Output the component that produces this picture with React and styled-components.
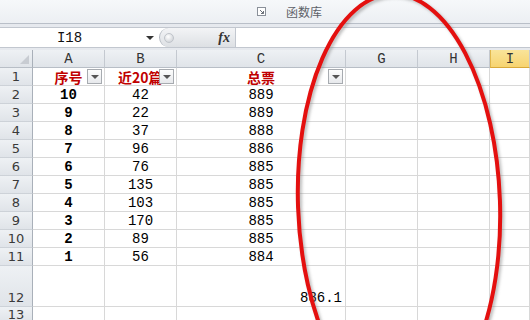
import React from 'react';
import styled, { createGlobalStyle, css } from 'styled-components';

const GlobalStyle = createGlobalStyle`
  html, body {
    margin: 0;
    padding: 0;
    background: #fff;
    overflow: hidden;
  }
  body {
    font-family: "Liberation Sans", Arial, sans-serif;
  }
`;

const Window = styled.div`
  position: relative;
  width: 530px;
  height: 320px;
  overflow: hidden;
  display: flex;
  flex-direction: column;
  background: #e6e9ee;
`;

const RibbonStrip = styled.div`
  height: 23px;
  flex: none;
  display: flex;
  align-items: center;
  background: linear-gradient(#f6f8fa, #eceff3);
  border-bottom: 1px solid #b9bfc8;
`;

const GroupLauncher = styled.div`
  width: 268px;
  display: flex;
  justify-content: flex-end;
  padding-right: 2px;
  box-sizing: border-box;
`;

const GroupLabel = styled.span`
  margin-left: 18px;
  font-family: "Noto Sans CJK SC", sans-serif;
  font-size: 12px;
  color: #5d6168;
`;

const FormulaRow = styled.div`
  height: 21px;
  flex: none;
  margin: 3px 0 2px;
  display: flex;
  background: #fff;
  border-top: 1px solid #c2c7cf;
  border-bottom: 1px solid #c2c7cf;
  box-sizing: border-box;
`;

const NameBox = styled.div`
  width: 159px;
  position: relative;
  display: flex;
  align-items: center;
  justify-content: center;
  padding-right: 20px;
  box-sizing: border-box;
  font-family: "Liberation Mono", monospace;
  font-size: 14px;
  color: #111;
`;

const Caret = styled.span`
  position: absolute;
  right: 5px;
  top: 8px;
  width: 0;
  height: 0;
  border-left: 4px solid transparent;
  border-right: 4px solid transparent;
  border-top: 4px solid #333;
`;

const FxArea = styled.div`
  width: 77px;
  display: flex;
  align-items: center;
  justify-content: space-between;
  padding: 0 5px 0 4px;
  box-sizing: border-box;
  background: linear-gradient(#f3f4f6, #dde0e4);
  border-left: 1px solid #b4b9c1;
  border-right: 1px solid #c2c7cf;
  border-radius: 10px 0 0 10px;
`;

const Grip = styled.span`
  width: 8px;
  height: 8px;
  border-radius: 50%;
  background: radial-gradient(circle at 40% 35%, #fff, #c5c9cf);
  border: 1px solid #c0c4ca;
`;

const Fx = styled.span`
  font-family: "Liberation Serif", serif;
  font-style: italic;
  font-weight: bold;
  font-size: 14px;
  color: #333;
`;

const FormulaInput = styled.div`
  flex: 1;
  background: #fff;
`;

const Sheet = styled.div`
  flex: 1;
  display: grid;
  grid-template-columns: 33px 72px 72px 169px 72px 72px 1fr;
  grid-template-rows: repeat(12, 18px) 41px 1fr;
  background: #fff;
`;

const headBase = css`
  box-sizing: border-box;
  background: linear-gradient(#eef1f4, #e0e4e9);
  border-right: 1px solid #c4c9d0;
  border-bottom: 1px solid #b8bec6;
  color: #333;
`;

const Corner = styled.div`
  ${headBase};
  position: relative;
  border-right-color: #a9b0b9;
  &::after {
    content: '';
    position: absolute;
    right: 3px;
    bottom: 3px;
    border-left: 9px solid transparent;
    border-bottom: 9px solid #c8ccd2;
  }
`;

const ColHead = styled.div`
  ${headBase};
  display: flex;
  align-items: center;
  justify-content: center;
  padding-top: 1px;
  font-family: "Liberation Mono", monospace;
  font-size: 14px;
  ${({ $active }) =>
    $active &&
    css`
      background: linear-gradient(#f9e49a, #f7d470);
      border-left: 1px solid #e2b84c;
      border-bottom-color: #d9a93a;
    `}
`;

const RowHead = styled.div`
  ${headBase};
  display: flex;
  align-items: ${({ $tall }) => ($tall ? 'flex-end' : 'center')};
  justify-content: center;
  padding-bottom: ${({ $tall }) => ($tall ? '1px' : '0')};
  border-right-color: #a9b0b9;
  border-bottom-color: #cdd2d8;
  font-family: "DejaVu Sans", sans-serif;
  font-size: 13px;
  color: #3a3a3a;
`;

const Cell = styled.div`
  position: relative;
  box-sizing: border-box;
  border-right: 1px solid #d8d8d8;
  border-bottom: 1px solid #d8d8d8;
  display: flex;
  align-items: ${({ $bottom }) => ($bottom ? 'flex-end' : 'center')};
  justify-content: ${({ $align }) =>
    $align === 'right' ? 'flex-end' : $align === 'left' ? 'flex-start' : 'center'};
  padding-right: ${({ $align }) => ($align === 'right' ? '3px' : '0')};
  padding-left: ${({ $indent }) => $indent || 0}px;
  overflow: hidden;
  white-space: nowrap;
  font-family: "Liberation Mono", monospace;
  font-size: 14px;
  font-weight: ${({ $bold }) => ($bold ? 700 : 400)};
  color: #000;
`;

const Title = styled.span`
  font-family: "Noto Sans CJK SC", sans-serif;
  font-size: 14px;
  font-weight: 700;
  color: #c00000;
`;

const FilterButton = styled.span`
  position: absolute;
  right: 2px;
  top: 1px;
  width: 15px;
  height: 15px;
  box-sizing: border-box;
  border: 1px solid #a7abb0;
  background: linear-gradient(#fdfdfd, #e7e9ec);
  display: flex;
  align-items: center;
  justify-content: center;
  &::after {
    content: '';
    border-left: 4px solid transparent;
    border-right: 4px solid transparent;
    border-top: 4px solid #555;
  }
`;

const Annotation = styled.svg`
  position: absolute;
  left: 0;
  top: 0;
  pointer-events: none;
`;

const rows = [
  [10, 42, 889],
  [9, 22, 889],
  [8, 37, 888],
  [7, 96, 886],
  [6, 76, 885],
  [5, 135, 885],
  [4, 103, 885],
  [3, 170, 885],
  [2, 89, 885],
  [1, 56, 884],
];

const columns = ['A', 'B', 'C', 'G', 'H', 'I'];

const LauncherIcon = () => (
  <svg width="9" height="9" viewBox="0 0 9 9">
    <rect x="0.5" y="0.5" width="8" height="8" fill="#fff" stroke="#8a9099" />
    <path d="M3 3 L6.5 6.5 M4 6.5 H6.5 V4" stroke="#6a7079" fill="none" />
  </svg>
);

export default function App() {
  return (
    <>
      <GlobalStyle />
      <Window>
        <RibbonStrip>
          <GroupLauncher>
            <LauncherIcon />
          </GroupLauncher>
          <GroupLabel>函数库</GroupLabel>
        </RibbonStrip>

        <FormulaRow>
          <NameBox>
            I18
            <Caret />
          </NameBox>
          <FxArea>
            <Grip />
            <Fx>fx</Fx>
          </FxArea>
          <FormulaInput />
        </FormulaRow>

        <Sheet>
          <Corner />
          {columns.map((c) => (
            <ColHead key={c} $active={c === 'I'}>
              {c}
            </ColHead>
          ))}

          <RowHead>1</RowHead>
          <Cell>
            <Title>序号</Title>
            <FilterButton />
          </Cell>
          <Cell $align="left" $indent={13}>
            <Title>近20篇</Title>
            <FilterButton />
          </Cell>
          <Cell>
            <Title>总票</Title>
            <FilterButton />
          </Cell>
          <Cell />
          <Cell />
          <Cell />

          {rows.map(([a, b, c], i) => (
            <React.Fragment key={i}>
              <RowHead>{i + 2}</RowHead>
              <Cell $bold>{a}</Cell>
              <Cell>{b}</Cell>
              <Cell>{c}</Cell>
              <Cell />
              <Cell />
              <Cell />
            </React.Fragment>
          ))}

          <RowHead $tall>12</RowHead>
          <Cell />
          <Cell />
          <Cell $align="right" $bottom>
            886.1
          </Cell>
          <Cell />
          <Cell />
          <Cell />

          <RowHead>13</RowHead>
          <Cell />
          <Cell />
          <Cell />
          <Cell />
          <Cell />
          <Cell />
        </Sheet>

        <Annotation width="530" height="320" viewBox="0 0 530 320">
          <defs>
            <filter id="soft" x="-10%" y="-10%" width="120%" height="120%">
              <feGaussianBlur stdDeviation="1.5" />
            </filter>
          </defs>
          <g transform="translate(2 2)">
            <ellipse
              cx="399"
              cy="204"
              rx="101"
              ry="210"
              transform="rotate(-2 399 204)"
              fill="none"
              stroke="#7a7a7a"
              strokeOpacity="0.5"
              strokeWidth="4"
              filter="url(#soft)"
            />
          </g>
          <ellipse
            cx="399"
            cy="204"
            rx="101"
            ry="210"
            transform="rotate(-2 399 204)"
            fill="none"
            stroke="#e4100f"
            strokeWidth="4"
          />
        </Annotation>
      </Window>
    </>
  );
}
